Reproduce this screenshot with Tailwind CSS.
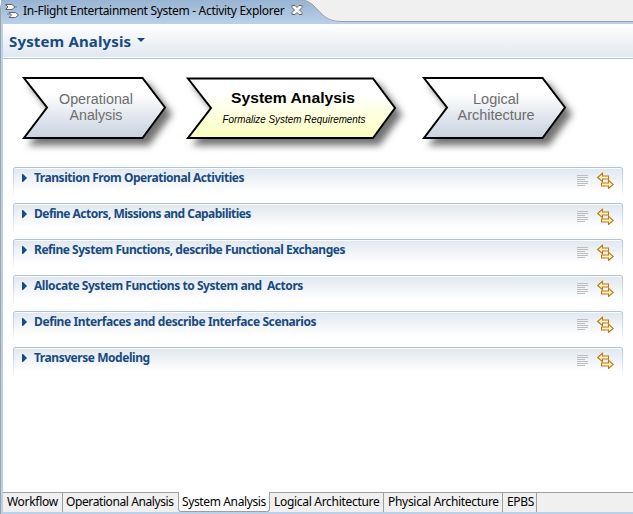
<!DOCTYPE html>
<html lang="en">
<head>
<meta charset="utf-8">
<title>Activity Explorer</title>
<script src="https://cdn.jsdelivr.net/npm/@tailwindcss/browser@4"></script>
</head>
<body class="w-[633px] h-[514px] overflow-hidden bg-white font-['Noto_Sans',sans-serif] text-[12px] leading-4 text-black">
<svg class="hidden">
  <defs>
    <symbol id="lines" viewBox="0 0 11 12"><path d="M0 .5h11M0 2.500h11M0 4.500h8M0 6.500h11M0 8.500h11M0 10.500h8" stroke="#bdbdbd" fill="none"/></symbol>
    <symbol id="swap" viewBox="0 0 17 17"><path d="M.7 5.500 5.500 1.300V4H11.500V7H5.500V9.500Z M16.200 12.500l-4.700-4.300V11H4.500v3h7v2.500Z" fill="#fff3c4" stroke="#bd7b12" stroke-width="1.100"/></symbol>
  </defs>
</svg>
<div class="w-full h-full flex flex-col border-l border-[#a0a0a0] rounded-tl-lg">
  <header class="h-6 shrink-0 relative bg-linear-to-b from-[#99b4d1] to-[#b9d1ea] flex items-center">
    <svg class="absolute right-0 top-0" width="333" height="24"><path d="M0 0H333V22H40C28 22 23 18 15 9Q8 1 1 0Z" transform="translate(2)" fill="#f0f0f0"/><path d="M2 0Q9 0 17 9C25 18 30 21.500 42 21.500H333" fill="none" stroke="#a0a0a0"/><path d="M40 22H333V24H40Z" fill="#b9d1ea"/></svg>
    <svg class="ml-[3px] -mt-1 shrink-0" width="16" height="17" viewBox="0 0 16 17"><g fill="#f8f8f8" stroke="#666"><path d="M1.500 2.500H8L11 5 8 7.500H1.500L4 5Z"/><path d="M5 10.500H11.500L14.500 13 11.500 15.500H5L7.500 13Z"/><path d="M11 5h2M3 12h3" stroke-width=".7"/></g></svg>
    <span class="ml-[3px] -mt-[2px] whitespace-nowrap tracking-[-0.3px] w-[262px]">In-Flight Entertainment System - Activity Explorer</span>
    <svg class="ml-[6px] -mt-1 relative" width="12" height="12" viewBox="0 0 12 12"><path d="M1 1.500h3l2 2 2-2h3v2L8.500 6 11 8.500v2H8l-2-2-2 2H1v-2L3.500 6 1 3.500Z" fill="#fff" stroke="#666"/></svg>
  </header>
  <div class="flex-1 min-h-0 border-l-2 border-[#b9d1ea] flex flex-col">
    <div class="h-[33px] shrink-0 bg-linear-to-b from-white to-[#e1e8f1] flex items-center pl-1.5 text-[#184a80]">
      <h1 class="text-[15px] leading-5 font-bold whitespace-nowrap tracking-[0.15px] w-[123px] mt-px">System Analysis</h1>
      <svg class="ml-[5px] -mt-px" width="8" height="4"><path d="M0 0h8L4 4Z" fill="#184a80"/></svg>
    </div>
    <div class="h-[2px] shrink-0 border-b border-[#aec4db]"></div>
    <svg class="shrink-0" width="630" height="108" viewBox="3 59 630 108" font-family="'Liberation Sans',sans-serif" text-anchor="middle">
      <defs>
        <linearGradient id="blue" x2="0" y2="1"><stop offset=".25" stop-color="#fff"/><stop offset="1" stop-color="#c7d1de"/></linearGradient>
        <linearGradient id="yellow" x2="0" y2="1"><stop offset=".25" stop-color="#fff"/><stop offset="1" stop-color="#fcffbc"/></linearGradient>
        <filter id="shadow" x="-10%" y="-20%" width="130%" height="160%"><feDropShadow dx="6" dy="6.500" stdDeviation="3.500" flood-color="#000" flood-opacity=".55"/></filter>
      </defs>
      <g stroke="#000" stroke-width="2" filter="url(#shadow)">
        <path d="M24 78H142.500L165 107.500 142.500 138H24L47 107.500Z" fill="url(#blue)"/>
        <path d="M188 78.500H373L395 108 373 138H188L211 108Z" fill="url(#yellow)"/>
        <path d="M424 78H542.500L565 107.500 542.500 138H424L447 107.500Z" fill="url(#blue)"/>
      </g>
      <g font-size="14" fill="#6d6d6d">
        <text x="96" y="104" textLength="74" lengthAdjust="spacingAndGlyphs">Operational</text><text x="96" y="120" textLength="53" lengthAdjust="spacingAndGlyphs">Analysis</text>
        <text x="496" y="104" textLength="46" lengthAdjust="spacingAndGlyphs">Logical</text><text x="496" y="120" textLength="77" lengthAdjust="spacingAndGlyphs">Architecture</text>
      </g>
      <text x="293" y="103" font-size="15.500" font-weight="bold" textLength="124" lengthAdjust="spacingAndGlyphs">System Analysis</text>
      <text x="294" y="123" font-size="10" font-style="italic" textLength="143" lengthAdjust="spacingAndGlyphs">Formalize System Requirements</text>
    </svg>
    <main id="sections" class="flex-1 px-[10px] flex flex-col gap-[5px] text-[#184a80] font-bold"></main>
    <nav class="h-[20px] shrink-0 border-t border-[#a0a0a0] bg-[#f0f0f0] flex whitespace-nowrap tracking-[-0.3px]">
      <span class="w-[60px] pl-1 pt-px border-r border-[#a0a0a0]">Workflow</span>
      <span class="w-[115px] pl-[3px] pt-px tracking-[-0.4px]">Operational Analysis</span>
      <span class="w-[92px] pl-[3px] -mt-px pt-[2px] border-x border-b border-[#a0a0a0] rounded-b-[3px] bg-white tracking-[-0.37px]">System Analysis</span>
      <span class="w-[114px] pl-1 pt-px border-r border-[#a0a0a0]">Logical Architecture</span>
      <span class="w-[119px] pl-1 pt-px border-r border-[#a0a0a0]">Physical Architecture</span>
      <span class="w-[34px] pl-1 pt-px border-r border-[#a0a0a0]">EPBS</span>
    </nav>
    <div class="h-[2px] shrink-0 bg-[#b9d1ea]"></div>
  </div>
</div>
<script>
const sections = [
  ['Transition From Operational Activities', 'tracking-[-0.46px]'],
  ['Define Actors, Missions and Capabilities', 'tracking-[-0.53px]'],
  ['Refine System Functions, describe Functional Exchanges', 'tracking-[-0.47px]'],
  ['Allocate System Functions to System and  Actors', 'tracking-[-0.45px]'],
  ['Define Interfaces and describe Interface Scenarios', 'tracking-[-0.4px]'],
  ['Transverse Modeling', 'tracking-[-0.45px]'],
];
document.getElementById('sections').innerHTML = sections.map(([name, tracking]) => `
  <section class="h-[31px] rounded-t-[3px] p-px bg-linear-to-b from-[#aec4db] to-white">
    <div class="h-full rounded-t-[2px] border-t border-white bg-linear-to-b from-[#e1e8f1] to-white to-80% flex items-start pl-2 pr-2">
      <svg class="mt-[5px]" width="5" height="8"><path d="M0 0h1l4 4-4 4H0Z" fill="#184a80"/></svg>
      <h2 class="ml-[7px] mt-px flex-1 whitespace-pre ${tracking}">${name}</h2>
      <svg class="mt-[6px]" width="11" height="12"><use href="#lines"/></svg>
      <svg class="ml-[9px] mt-[3px]" width="17" height="17"><use href="#swap"/></svg>
    </div>
  </section>`).join('');
</script>
</body>
</html>
